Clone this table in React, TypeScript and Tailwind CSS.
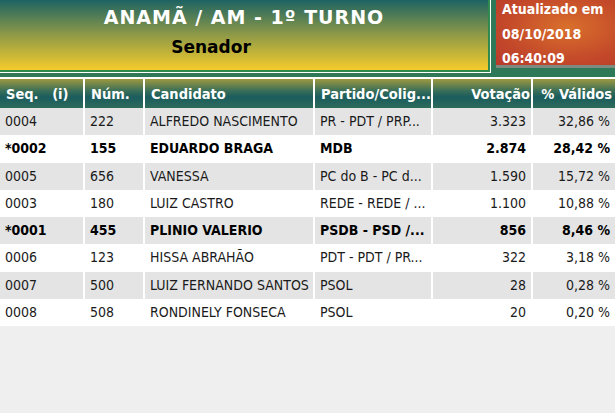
import React from "react";

type Row = {
  seq: string;
  num: string;
  nome: string;
  partido: string;
  votos: string;
  pct: string;
  eleito?: boolean;
};

const rows: Row[] = [
  { seq: "0004", num: "222", nome: "ALFREDO NASCIMENTO", partido: "PR - PDT / PRP...", votos: "3.323", pct: "32,86 %" },
  { seq: "*0002", num: "155", nome: "EDUARDO BRAGA", partido: "MDB", votos: "2.874", pct: "28,42 %", eleito: true },
  { seq: "0005", num: "656", nome: "VANESSA", partido: "PC do B - PC d...", votos: "1.590", pct: "15,72 %" },
  { seq: "0003", num: "180", nome: "LUIZ CASTRO", partido: "REDE - REDE / ...", votos: "1.100", pct: "10,88 %" },
  { seq: "*0001", num: "455", nome: "PLINIO VALERIO", partido: "PSDB - PSD /...", votos: "856", pct: "8,46 %", eleito: true },
  { seq: "0006", num: "123", nome: "HISSA ABRAHÃO", partido: "PDT - PDT / PR...", votos: "322", pct: "3,18 %" },
  { seq: "0007", num: "500", nome: "LUIZ FERNANDO SANTOS", partido: "PSOL", votos: "28", pct: "0,28 %" },
  { seq: "0008", num: "508", nome: "RONDINELY FONSECA", partido: "PSOL", votos: "20", pct: "0,20 %" },
];

const cols = "grid grid-cols-[83px_58px_168px_116px_98px_1fr] gap-x-[2px]";

export default function App() {
  return (
    <div
      className="flex h-[413px] w-[615px] flex-col overflow-hidden bg-[#efefef]"
      style={{ fontFamily: '"DejaVu Sans Condensed", "DejaVu Sans", sans-serif' }}
    >
      {/* cabeçalho */}
      <div className="flex h-[77px] shrink-0 bg-[#2f7858]">
        <div className="h-[73px] w-[491px] border-b border-r border-white">
          <div className="flex h-full flex-col items-center border-b-2 border-r-2 border-[#2f8a4d] bg-[linear-gradient(to_bottom,#1d6362_0%,#8f9a47_50%,#f5cb2b_100%)] [font-family:'DejaVu_Sans',sans-serif]">
            <div className="mt-[5px] text-[19px] font-bold leading-[24px] tracking-[1px] text-white">ANAMÃ / AM - 1º TURNO</div>
            <div className="mt-[6px] mr-[66px] text-[17px] font-bold leading-[24px] text-black">Senador</div>
          </div>
        </div>
        <div className="ml-[5px] flex-1">
          <div className="h-[68px] bg-[radial-gradient(ellipse_at_60%_45%,#d9702c_0%,#c44a2a_60%,#b93a2a_100%)] pl-[6px] text-[14px] font-bold leading-[24.5px] text-white shadow-[0_3px_0_#7d8a80]">
            <div className="-mt-[3px]">Atualizado em</div>
            <div>08/10/2018</div>
            <div>06:40:09</div>
          </div>
        </div>
      </div>

      {/* tabela */}
      <div className="bg-white pt-[2px]">
        <div className={`${cols} h-[29px] text-[14.5px] font-bold text-white`}>
          {["Seq.\u00a0\u00a0\u00a0(i)", "Núm.", "Candidato", "Partido/Colig...", "Votação", "% Válidos"].map((h, i) => (
            <div
              key={h}
              className={`flex items-center pt-[2px] bg-[linear-gradient(to_bottom,#9c9940_0%,#3b6f58_40%,#1b5c5e_62%,#2d6b5a_100%)] ${
                i === 4 ? "justify-end pr-[1px]" : i === 5 ? "justify-end pr-[3px]" : "pl-[6px]"
              }`}
            >
              {h}
            </div>
          ))}
        </div>
        {rows.map((r, idx) => (
          <div
            key={r.seq}
            className={`${cols} h-[27.25px] text-[14px] text-[#1a1a1a] ${r.eleito ? "font-bold text-black" : ""}`}
          >
            {[r.seq, r.num, r.nome, r.partido, r.votos, r.pct].map((c, i) => (
              <div
                key={i}
                className={`flex items-center whitespace-nowrap ${idx % 2 === 0 ? "bg-[#e4e4e4]" : "bg-white"} ${
                  i === 4 ? "justify-end pr-[5px]" : i === 5 ? "justify-end pr-[5px]" : "pl-[5px]"
                }`}
              >
                {c}
              </div>
            ))}
          </div>
        ))}
      </div>
    </div>
  );
}
